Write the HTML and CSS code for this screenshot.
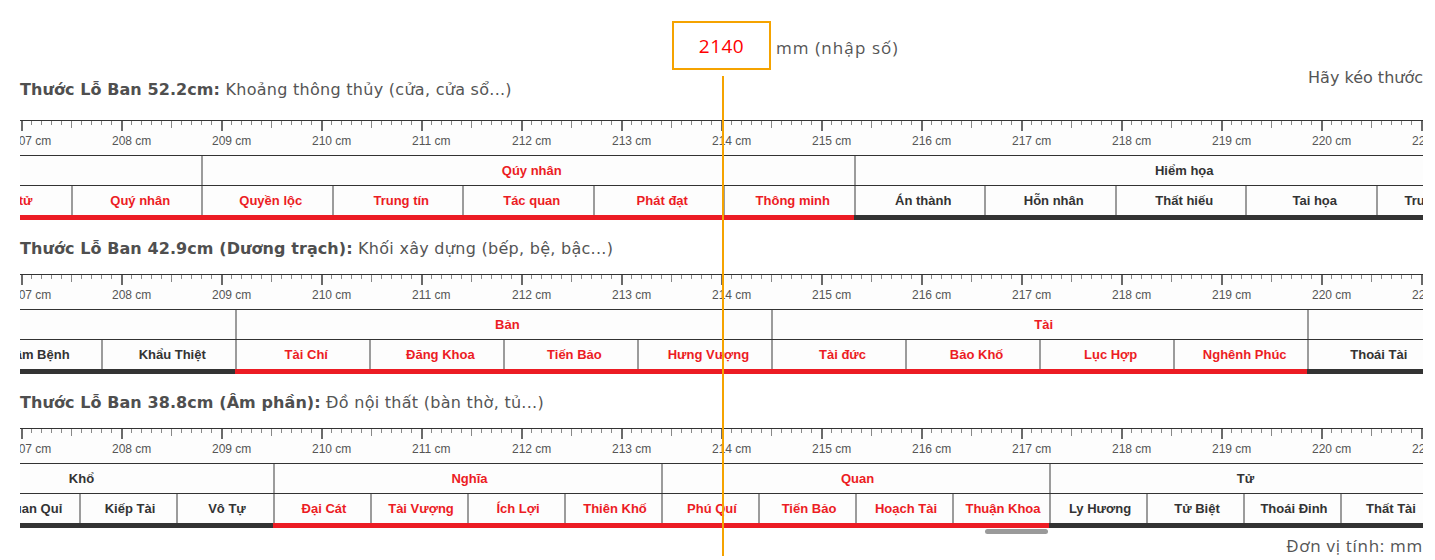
FILE: index.html
```html
<!DOCTYPE html>
<html lang="vi">
<head>
<meta charset="utf-8">
<title>Thước Lỗ Ban</title>
<link rel="stylesheet" href="styles.css">
</head>
<body>
<div class="page">
  <div class="content">
    <div class="top">
      <div></div>
      <div class="num-box">2140</div>
      <div class="unit">mm (nhập số)</div>
    </div>

    <div class="title-row">
      <h2 class="title"><b>Thước Lỗ Ban 52.2cm:</b> Khoảng thông thủy (cửa, cửa sổ...)</h2>
      <div class="hint">Hãy kéo thước</div>
    </div>
    <div class="ruler r1 first">
      <div class="scale">
        <div class="ticks"></div>
        <div class="labels"><span>207 cm</span><span>208 cm</span><span>209 cm</span><span>210 cm</span><span>211 cm</span><span>212 cm</span><span>213 cm</span><span>214 cm</span><span>215 cm</span><span>216 cm</span><span>217 cm</span><span>218 cm</span><span>219 cm</span><span>220 cm</span><span>221 cm</span></div>
      </div>
      <div class="row">
        <div class="cell group good">Tể tướng</div>
        <div class="cell group good">Qúy nhân</div>
        <div class="cell group bad">Hiểm họa</div>
      </div>
      <div class="row">
        <div class="cell item good">Đại tài</div>
        <div class="cell item good">Thi thơ</div>
        <div class="cell item good">Hoạnh tài</div>
        <div class="cell item good">Hiếu tử</div>
        <div class="cell item good">Quý nhân</div>
        <div class="cell item good">Quyền lộc</div>
        <div class="cell item good">Trung tín</div>
        <div class="cell item good">Tác quan</div>
        <div class="cell item good">Phát đạt</div>
        <div class="cell item good">Thông minh</div>
        <div class="cell item bad">Án thành</div>
        <div class="cell item bad">Hỗn nhân</div>
        <div class="cell item bad">Thất hiếu</div>
        <div class="cell item bad">Tai họa</div>
        <div class="cell item bad">Trường bệnh</div>
      </div>
      <div class="bar">
        <div class="seg seg-good"></div>
        <div class="seg seg-good"></div>
        <div class="seg seg-bad"></div>
      </div>
    </div>

    <h2 class="title sec"><b>Thước Lỗ Ban 42.9cm (Dương trạch):</b> Khối xây dựng (bếp, bệ, bậc...)</h2>
    <div class="ruler r2">
      <div class="scale">
        <div class="ticks"></div>
        <div class="labels"><span>207 cm</span><span>208 cm</span><span>209 cm</span><span>210 cm</span><span>211 cm</span><span>212 cm</span><span>213 cm</span><span>214 cm</span><span>215 cm</span><span>216 cm</span><span>217 cm</span><span>218 cm</span><span>219 cm</span><span>220 cm</span><span>221 cm</span></div>
      </div>
      <div class="row">
        <div class="cell group bad">Hại</div>
        <div class="cell group good">Bản</div>
        <div class="cell group good">Tài</div>
        <div class="cell group bad">Bệnh</div>
      </div>
      <div class="row">
        <div class="cell item bad">Tai Chí</div>
        <div class="cell item bad">Tử Tuyệt</div>
        <div class="cell item bad">Lâm Bệnh</div>
        <div class="cell item bad">Khẩu Thiệt</div>
        <div class="cell item good">Tài Chí</div>
        <div class="cell item good">Đăng Khoa</div>
        <div class="cell item good">Tiến Bảo</div>
        <div class="cell item good">Hưng Vượng</div>
        <div class="cell item good">Tài đức</div>
        <div class="cell item good">Bảo Khố</div>
        <div class="cell item good">Lục Hợp</div>
        <div class="cell item good">Nghênh Phúc</div>
        <div class="cell item bad">Thoái Tài</div>
        <div class="cell item bad">Công Sự</div>
        <div class="cell item bad">Lao Chấp</div>
        <div class="cell item bad">Cô Quả</div>
      </div>
      <div class="bar">
        <div class="seg seg-bad"></div>
        <div class="seg seg-good"></div>
        <div class="seg seg-good"></div>
        <div class="seg seg-bad"></div>
      </div>
    </div>

    <h2 class="title sec"><b>Thước Lỗ Ban 38.8cm (Âm phần):</b> Đồ nội thất (bàn thờ, tủ...)</h2>
    <div class="ruler r3">
      <div class="scale">
        <div class="ticks"></div>
        <div class="labels"><span>207 cm</span><span>208 cm</span><span>209 cm</span><span>210 cm</span><span>211 cm</span><span>212 cm</span><span>213 cm</span><span>214 cm</span><span>215 cm</span><span>216 cm</span><span>217 cm</span><span>218 cm</span><span>219 cm</span><span>220 cm</span><span>221 cm</span></div>
      </div>
      <div class="row">
        <div class="cell group bad">Khổ</div>
        <div class="cell group good">Nghĩa</div>
        <div class="cell group good">Quan</div>
        <div class="cell group bad">Tử</div>
      </div>
      <div class="row">
        <div class="cell item bad">Thất Thoát</div>
        <div class="cell item bad">Quan Quỉ</div>
        <div class="cell item bad">Kiếp Tài</div>
        <div class="cell item bad">Vô Tự</div>
        <div class="cell item good">Đại Cát</div>
        <div class="cell item good">Tài Vượng</div>
        <div class="cell item good">Ích Lợi</div>
        <div class="cell item good">Thiên Khố</div>
        <div class="cell item good">Phú Quí</div>
        <div class="cell item good">Tiến Bảo</div>
        <div class="cell item good">Hoạch Tài</div>
        <div class="cell item good">Thuận Khoa</div>
        <div class="cell item bad">Ly Hương</div>
        <div class="cell item bad">Tử Biệt</div>
        <div class="cell item bad">Thoái Đinh</div>
        <div class="cell item bad">Thất Tài</div>
      </div>
      <div class="bar">
        <div class="seg seg-bad"></div>
        <div class="seg seg-good"></div>
        <div class="seg seg-good"></div>
        <div class="seg seg-bad"></div>
      </div>
    </div>

    <div class="scrollbar"><div class="thumb"></div></div>
    <div class="unit-note">Đơn vị tính: mm</div>

    <div class="needle"></div>
  </div>
</div>
</body>
</html>
```

FILE: styles.css
```css
html, body {
  margin: 0;
  padding: 0;
  overflow: hidden;
  background: #fff;
}

.page {
  padding: 21px 12px 0 20px;
}

.content {
  position: relative;
}

/* ---------- header ---------- */
.top {
  display: grid;
  grid-template-columns: 1fr 99px 1fr;
  height: 49px;
}

.num-box {
  box-sizing: border-box;
  border: 2px solid #f5a300;
  display: flex;
  align-items: center;
  justify-content: center;
  font-family: "Open Sans", sans-serif;
  font-size: 19px;
  letter-spacing: 0.5px;
  color: #f00;
}

.unit {
  align-self: center;
  padding: 3px 0 0 5px;
  font-family: "Open Sans", sans-serif;
  font-size: 17px;
  letter-spacing: 1.1px;
  color: #555;
}

.title-row {
  display: flex;
  justify-content: space-between;
  align-items: flex-start;
  margin-top: -2px;
}

.title {
  margin: 0;
  font-family: "DejaVu Sans", Verdana, sans-serif;
  font-size: 16px;
  line-height: 20px;
  font-weight: normal;
  letter-spacing: 0.28px;
  color: #555;
  white-space: nowrap;
}

.title b {
  font-weight: bold;
  letter-spacing: 0.08px;
  color: #4f4f4f;
}

.title-row .title {
  padding-top: 12px;
}

.title.sec {
  margin: 19px 0 15px;
}

.hint {
  font-family: "DejaVu Sans", Verdana, sans-serif;
  font-size: 16px;
  line-height: 20px;
  color: #555;
  white-space: nowrap;
}

/* ---------- ruler ---------- */
.ruler {
  overflow: hidden;
  background: #fdfdfd;
}

.ruler.first {
  margin-top: 20px;
}

.scale {
  height: 34px;
  border-top: 1px solid #333;
}

.ticks {
  height: 10px;
  background-image:
    linear-gradient(to right, #6a6a6a 0 2px, transparent 2px),
    linear-gradient(to right, #888 0 1px, transparent 1px),
    linear-gradient(to right, #888 0 1px, transparent 1px);
  background-size: 100px 10px, 100px 7px, 10px 4px;
  background-position: 1px 0, 51px 0, 1px 0;
  background-repeat: repeat-x;
}

.labels {
  display: flex;
  margin: 3px 0 0 -8px;
  font-family: "Liberation Sans", Arial, sans-serif;
  font-size: 12px;
  line-height: 14px;
  color: #555;
  white-space: nowrap;
}

.labels span {
  flex: none;
  width: 100px;
}

.row {
  display: flex;
  height: 29px;
  border-top: 1px solid #333;
}

.cell {
  flex: none;
  box-sizing: border-box;
  height: 29px;
  border-left: 2px solid #9c9c9c;
  padding-left: 7px;
  text-align: center;
  font-family: "Liberation Sans", Arial, sans-serif;
  font-size: 13px;
  font-weight: bold;
  line-height: 29px;
  white-space: nowrap;
  overflow: hidden;
}

.good { color: #ec1c24; }
.bad { color: #333; }

.bar {
  display: flex;
  height: 5px;
}

.seg { flex: none; height: 5px; }
.seg-good { background: #ec1c24; }
.seg-bad { background: #333; }

/* ruler 52.2 cm */
.r1 .row, .r1 .bar { margin-left: -471.5px; }
.r1 .group, .r1 .seg { width: 652.5px; }
.r1 .item { width: 130.5px; }

/* ruler 42.9 cm */
.r2 .row, .r2 .bar { margin-left: -321.5px; }
.r2 .group, .r2 .seg { width: 536.25px; }
.r2 .item { width: 134.0625px; }

/* ruler 38.8 cm */
.r3 .row, .r3 .bar { margin-left: -135px; }
.r3 .group, .r3 .seg { width: 388px; }
.r3 .item { width: 97px; }
.r3 .cell { padding-left: 3px; }

/* ---------- bottom ---------- */
.scrollbar {
  height: 5px;
  margin-top: 1px;
}

.thumb {
  margin-left: 965px;
  width: 63px;
  height: 5px;
  border-radius: 3px;
  background: #9a9a9a;
}

.unit-note {
  margin-top: 2px;
  text-align: right;
  font-family: "Open Sans", sans-serif;
  font-size: 17px;
  line-height: 20px;
  letter-spacing: 0.7px;
  color: #555;
}

.needle {
  position: absolute;
  left: 50%;
  top: 55px;
  width: 2px;
  height: 600px;
  background: #f5a300;
}
```
